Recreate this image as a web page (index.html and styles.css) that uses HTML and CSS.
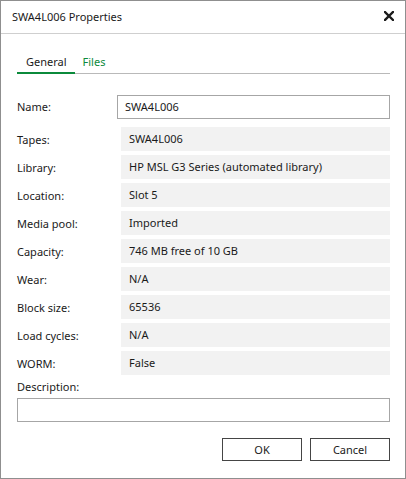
FILE: index.html
```html
<!DOCTYPE html>
<html>
<head>
<meta charset="utf-8">
<link rel="stylesheet" href="styles.css">
</head>
<body>
<div class="window">
  <div class="titlebar">
    <span class="title">SWA4L006 Properties</span>
    <svg class="close" width="10" height="10" viewBox="0 0 10 10"><path d="M1 1 L9 9 M9 1 L1 9" stroke="#1a1a1a" stroke-width="2.4" stroke-linecap="square"/></svg>
  </div>
  <div class="content">
    <div class="tabs">
      <div class="tab active">General</div>
      <div class="tab">Files</div>
    </div>
    <div class="row row-name">
      <div class="label">Name:</div>
      <div class="input">SWA4L006</div>
    </div>
    <div class="fields">
      <div class="row"><div class="label">Tapes:</div><div class="value">SWA4L006</div></div>
      <div class="row"><div class="label">Library:</div><div class="value">HP MSL G3 Series (automated library)</div></div>
      <div class="row"><div class="label">Location:</div><div class="value">Slot 5</div></div>
      <div class="row"><div class="label">Media pool:</div><div class="value">Imported</div></div>
      <div class="row"><div class="label">Capacity:</div><div class="value">746 MB free of 10 GB</div></div>
      <div class="row"><div class="label">Wear:</div><div class="value">N/A</div></div>
      <div class="row"><div class="label">Block size:</div><div class="value">65536</div></div>
      <div class="row"><div class="label">Load cycles:</div><div class="value">N/A</div></div>
      <div class="row"><div class="label">WORM:</div><div class="value">False</div></div>
    </div>
    <div class="desc-label">Description:</div>
    <div class="input desc"></div>
    <div class="buttons">
      <div class="btn">OK</div>
      <div class="btn">Cancel</div>
    </div>
  </div>
</div>
</body>
</html>
```
FILE: styles.css
```css
html, body {
  margin: 0;
  padding: 0;
  background: #ffffff;
}
body {
  font-family: "Noto Sans", "Open Sans", sans-serif;
  font-size: 11px;
  color: #1a1a1a;
}
.window {
  width: 406px;
  height: 479px;
  box-sizing: border-box;
  border: 1px solid #8f8f8f;
  background: #fff;
}
.titlebar {
  height: 32px;
  border-bottom: 1px solid #cfcfcf;
  display: flex;
  align-items: center;
  justify-content: space-between;
  padding: 0 11px 0 11px;
}
.title {
  font-size: 11px;
  line-height: 16px;
  margin-top: -1px;
}
.close {
  display: block;
  margin-top: -3px;
}
.content {
  padding: 0 15px 0 16px;
}
.tabs {
  display: flex;
  margin-top: 17px;
  border-bottom: 1px solid #b9b9b9;
}
.tab {
  height: 20px;
  line-height: 20px;
  padding: 1px 8px 0 9px;
  border-bottom: 2px solid transparent;
  margin-bottom: -1px;
  color: #0b8a3b;
}
.tab.active {
  color: #1a1a1a;
  border-bottom-color: #0b8a3b;
}
.tab + .tab {
  padding-left: 8px;
}
.row {
  display: flex;
  align-items: center;
  height: 24px;
}
.row-name {
  margin-top: 21px;
}
.row-name .label {
  width: 100px;
  margin-top: -2px;
}
.label {
  width: 104px;
  flex: none;
}
.input {
  flex: 1;
  height: 24px;
  box-sizing: border-box;
  border: 1px solid #a6a6a6;
  line-height: 22px;
  padding: 0 7px;
}
.fields {
  margin-top: 8px;
  display: flex;
  flex-direction: column;
  gap: 4px;
}
.value {
  flex: 1;
  height: 24px;
  line-height: 24px;
  background: #f2f2f2;
  padding: 0 8px;
}
.desc-label {
  margin-top: 4px;
  line-height: 16px;
}
.input.desc {
  margin-top: 3px;
}
.buttons {
  display: flex;
  justify-content: flex-end;
  gap: 8px;
  margin-top: 16px;
}
.btn {
  width: 80px;
  height: 23px;
  box-sizing: border-box;
  border: 1px solid #454545;
  text-align: center;
  line-height: 21px;
}
```
